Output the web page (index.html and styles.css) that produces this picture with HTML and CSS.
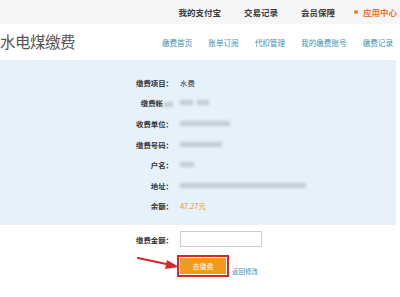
FILE: index.html
```html
<!DOCTYPE html>
<html lang="zh">
<head>
  <meta charset="UTF-8" />
  <title>水电煤缴费</title>
  <link rel="stylesheet" href="styles.css">
</head>
<body>

  <div class="topbar">
    <a class="top-link">我的支付宝</a>
    <a class="top-link">交易记录</a>
    <a class="top-link">会员保障</a>
    <a class="top-link app"><span class="dot"></span>应用中心</a>
  </div>

  <div class="header">
    <h1>水电煤缴费</h1>
    <div class="subnav">
      <a>缴费首页</a>
      <a>账单订阅</a>
      <a>代扣管理</a>
      <a>我的缴费账号</a>
      <a>缴费记录</a>
    </div>
  </div>

  <div class="panel">
    <div class="info">
      <span class="label">缴费项目：</span><span class="value">水费</span>
      <span class="label">缴费帐<i class="blur" style="width:9px"></i></span><span class="value"><i class="blur" style="width:13px"></i><i class="blur" style="width:12px"></i></span>
      <span class="label">收费单位：</span><span class="value"><i class="blur" style="width:50px"></i></span>
      <span class="label">缴费号码：</span><span class="value"><i class="blur" style="width:42px"></i></span>
      <span class="label">户名：</span><span class="value"><i class="blur" style="width:14px"></i></span>
      <span class="label">地址：</span><span class="value"><i class="blur" style="width:126px"></i></span>
      <span class="label">余额：</span><span class="value money">47.27元</span>
    </div>
  </div>

  <div class="pay">
    <span class="label">缴费金额：</span>
    <span class="value"><input type="text" class="amount"></span>
    <span></span>
    <span class="value actions">
      <button class="btn">去缴费</button>
      <a class="back">返回修改</a>
    </span>
    <svg class="arrow" width="44" height="14" viewBox="0 0 44 14">
      <path d="M1 2 L34 9" stroke="#d8262c" stroke-width="2.2" fill="none" stroke-linecap="round"/>
      <path d="M30 4 L42 11 L28 13 Z" fill="#d8262c"/>
    </svg>
  </div>

</body>
</html>
```

FILE: styles.css
```css
body {
  margin: 0;
  padding: 0;
  font-family: "Noto Sans CJK SC", "Noto Sans", sans-serif;
  background: #fff;
  color: #333;
  width: 400px;
  overflow: hidden;
}

a {
  text-decoration: none;
  cursor: pointer;
}

.topbar {
  height: 24px;
  background: #f6f6f6;
  display: flex;
  justify-content: flex-end;
  align-items: center;
  gap: 23px;
  padding-right: 3px;
}

.top-link {
  font-size: 8.5px;
  font-weight: bold;
  color: #3a3a3a;
}

.top-link.app {
  color: #e8762a;
  display: flex;
  align-items: center;
  margin-left: -4px;
}

.dot {
  width: 4px;
  height: 4px;
  border-radius: 50%;
  background: #ee7d2c;
  margin-right: 5px;
}

.header {
  height: 36px;
  display: flex;
  align-items: center;
  justify-content: space-between;
  padding-right: 7px;
}

h1 {
  margin: 0 0 2px 0;
  font-size: 15.5px;
  font-weight: normal;
  color: #555;
  letter-spacing: -0.5px;
}

.subnav {
  display: flex;
  gap: 16px;
  margin-top: 1px;
}

.subnav a {
  font-size: 7.6px;
  color: #3e8fb3;
}

.panel {
  background: #e7f1f9;
  width: 396px;
  padding: 12px 0 9px;
}

.info,
.pay {
  display: grid;
  grid-template-columns: 173px 1fr;
  column-gap: 7px;
  align-items: center;
}

.info {
  grid-auto-rows: 20.6px;
}

.label {
  text-align: right;
  font-size: 7.4px;
  font-weight: bold;
  color: #333;
  white-space: nowrap;
}

.value {
  font-size: 7.4px;
  color: #333;
  display: flex;
  align-items: center;
  gap: 4px;
}

.money {
  color: #e8923a;
}

.blur {
  display: inline-block;
  height: 5px;
  background: #c3cbd2;
  filter: blur(1.8px);
  vertical-align: middle;
}

.label .blur {
  margin-left: 1px;
}

.pay {
  position: relative;
  padding-top: 6px;
  grid-template-rows: 16px 29px;
  row-gap: 7px;
}

.amount {
  width: 80px;
  height: 14px;
  margin: 0;
  padding: 0;
  border: 1px solid #ccc;
  background: #fff;
  outline: none;
}

.actions {
  align-self: start;
  padding-top: 4px;
  gap: 6px;
  align-items: flex-end;
}

.btn {
  width: 46px;
  height: 16px;
  border: none;
  background: #f09a1e;
  color: #fff;
  font-family: inherit;
  font-size: 7px;
  padding: 0;
  outline: 2px solid #d9232d;
  outline-offset: 1px;
}

.back {
  font-size: 6.5px;
  color: #3e8fb3;
  margin-bottom: -2px;
}

.arrow {
  position: absolute;
  left: 137px;
  top: 31px;
}
```
